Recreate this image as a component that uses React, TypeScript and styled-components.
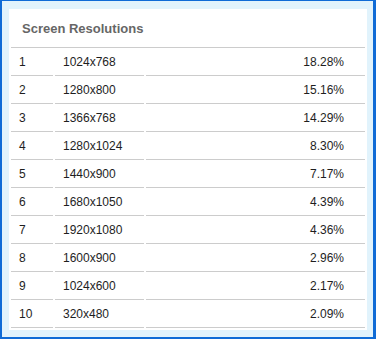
import React from 'react'
import styled, { createGlobalStyle } from 'styled-components'

const GlobalStyle = createGlobalStyle`
  html, body {
    margin: 0;
    padding: 0;
    background: #ffffff;
  }
  body {
    font-family: 'Liberation Sans', Arial, sans-serif;
  }
`

const Frame = styled.div`
  box-sizing: border-box;
  width: 376px;
  height: 339px;
  border-style: solid;
  border-color: #0f6bd6;
  border-width: 1px 3px 2px 2px;
  background: #e1f3fc;
  padding: 8px 6px 7px 7px;
`

const Card = styled.section`
  box-sizing: border-box;
  height: 100%;
  background: #ffffff;
`

const Table = styled.table`
  width: 100%;
  table-layout: fixed;
  border-collapse: separate;
  border-spacing: 2px 0;
  font-size: 12px;
  color: #1e1e1e;
`

const TitleCell = styled.th`
  box-sizing: border-box;
  height: 39px;
  padding: 1px 0 0 11px;
  text-align: left;
  font-size: 13px;
  font-weight: bold;
  color: #666666;
  border-bottom: 1px solid #cccccc;
`

const Cell = styled.td<{ $align?: 'left' | 'right'; $pad: string }>`
  box-sizing: border-box;
  height: 28px;
  padding: ${(p) => p.$pad};
  text-align: ${(p) => p.$align ?? 'left'};
  border-bottom: 1px solid #cccccc;
  white-space: nowrap;
`

const rows: [string, string][] = [
  ['1024x768', '18.28%'],
  ['1280x800', '15.16%'],
  ['1366x768', '14.29%'],
  ['1280x1024', '8.30%'],
  ['1440x900', '7.17%'],
  ['1680x1050', '4.39%'],
  ['1920x1080', '4.36%'],
  ['1600x900', '2.96%'],
  ['1024x600', '2.17%'],
  ['320x480', '2.09%'],
]

export default function App() {
  return (
    <>
      <GlobalStyle />
      <Frame>
        <Card>
          <Table>
            <colgroup>
              <col style={{ width: 42 }} />
              <col style={{ width: 89 }} />
              <col />
            </colgroup>
            <thead>
              <tr>
                <TitleCell colSpan={3}>Screen Resolutions</TitleCell>
              </tr>
            </thead>
            <tbody>
              {rows.map(([res, share], i) => (
                <tr key={res}>
                  <Cell $pad="0 0 0 8px">{i + 1}</Cell>
                  <Cell $pad="0 0 0 8px">{res}</Cell>
                  <Cell $pad="0 21px 0 0" $align="right">
                    {share}
                  </Cell>
                </tr>
              ))}
            </tbody>
          </Table>
        </Card>
      </Frame>
    </>
  )
}
